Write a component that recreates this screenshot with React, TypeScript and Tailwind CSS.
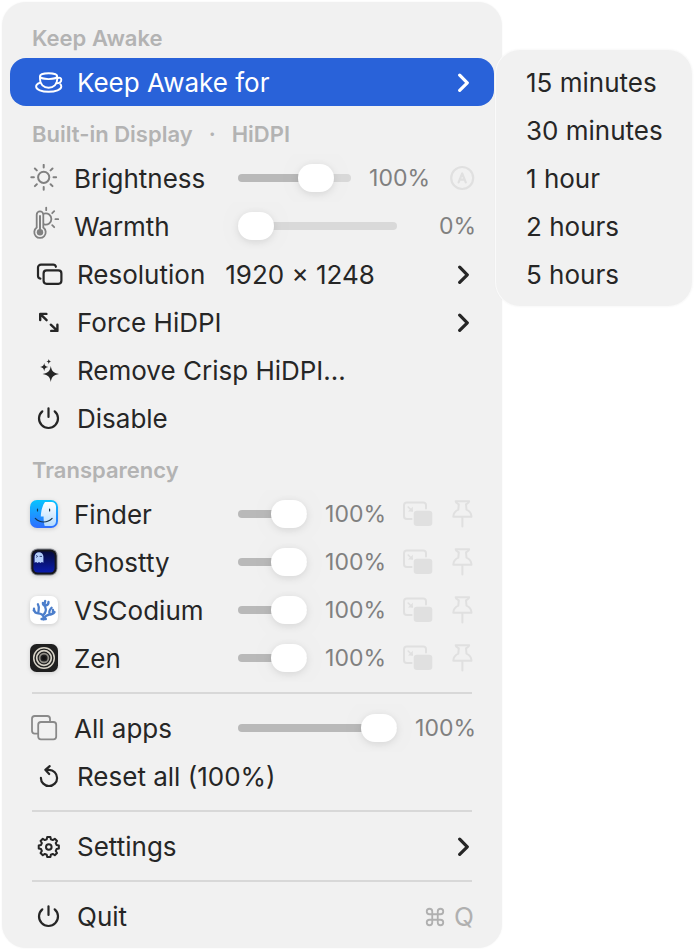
import React from 'react';
import { Command } from 'lucide-react';

const Cup = () => (
  <svg className="w-8 h-6 overflow-visible" viewBox="0 0 32 24" fill="none" stroke="currentColor" strokeWidth="1.9" strokeLinecap="round">
    <ellipse cx="16.6" cy="6.2" rx="8.6" ry="2.9" />
    <path d="M8 6.4v2.8c0 5 3.500 8.600 8.600 8.600s8.600-3.600 8.600-8.600V6.400" />
    <path d="M25.400 8.200c2-1 3.900-.2 3.900 1.600 0 2.100-2 3.500-4.900 3.500" />
    <path d="M7.600 12.800c-2.100.8-3.500 2.100-3.500 3.600 0 3.100 5.600 5.400 12.500 5.400s12.700-2.300 12.700-5.400c0-.9-.4-1.600-1-2.200" />
  </svg>
);

const Windows = () => (
  <svg className="w-8 h-6" viewBox="0 0 32 24" fill="none" stroke="currentColor" strokeWidth="2.2" strokeLinecap="round">
    <rect x="11.6" y="8.4" width="17.8" height="13.4" rx="3" />
    <path d="M8.4 16.6A2.8 2.8 0 0 1 6 13.800V5.600a3 3 0 0 1 3-3h12.200a2.800 2.800 0 0 1 2.700 2.200" />
  </svg>
);

const Expand = () => (
  <svg className="w-8 h-6" viewBox="0 0 32 24" fill="none" stroke="currentColor" strokeWidth="2.4" strokeLinecap="round" strokeLinejoin="round">
    <path d="M8.2 10V3.900h6.200M8.400 4.100l6.200 6.100M25.400 14.700v6.200h-6.200M25.200 20.700l-6.400-6" />
  </svg>
);

const Stars = () => (
  <svg className="w-8 h-6" viewBox="0 0 32 24" fill="currentColor">
    <path d="M18.8 8c.9 5 2.400 6.800 8.200 8-5.800 1.200-7.300 3-8.200 8-.9-5-2.400-6.800-8.200-8 5.800-1.200 7.300-3 8.200-8z" />
    <path d="M12.200 5c.5 2.600 1.200 3.500 4.100 4.100-2.900.6-3.600 1.500-4.100 4.100-.5-2.600-1.200-3.500-4.100-4.100 2.900-.6 3.600-1.500 4.100-4.100z" />
    <path d="M16.800 1c.3 1.600.8 2.200 2.500 2.600-1.700.4-2.200 1-2.500 2.600-.3-1.600-.8-2.200-2.500-2.600 1.700-.4 2.200-1 2.500-2.600z" />
  </svg>
);

const Power = () => (
  <svg className="w-8 h-6" viewBox="0 0 32 24" fill="none" stroke="currentColor" strokeWidth="2.2" strokeLinecap="round">
    <path d="M16.500 2.300v8.600M10.300 5.300a9.500 9.500 0 1 0 12.400 0" />
  </svg>
);

const Reset = () => (
  <svg className="w-8 h-6" viewBox="0 0 32 24" fill="none" stroke="currentColor" strokeWidth="2.2" strokeLinecap="round" strokeLinejoin="round">
    <path d="M17.700 2.200l-4.400 3.600 3.900 4.200M13.600 5.800H17a8.100 8.100 0 1 1-8.100 8.100" />
  </svg>
);

const gearPath = Array.from({ length: 8 }, (_, i) =>
  [[-15, 8], [-9, 10.2], [9, 10.2], [15, 8]]
    .map(([deg, r]) => {
      const a = ((i * 45 + deg - 90) * Math.PI) / 180;
      return `${(16.8 + r * Math.cos(a)).toFixed(2)} ${(13 + r * Math.sin(a)).toFixed(2)}`;
    })
    .join('L')
).join('L');

const Gear = () => (
  <svg className="w-8 h-6 overflow-visible" viewBox="0 0 32 24" fill="none" stroke="currentColor" strokeWidth="2" strokeLinejoin="round">
    <path d={`M${gearPath}Z`} />
    <circle cx="16.8" cy="13" r="2.8" />
  </svg>
);

const Sun = () => (
  <svg className="w-7 h-7" viewBox="0 0 28 28" fill="none" stroke="#808080" strokeWidth="2" strokeLinecap="round">
    <circle cx="13.7" cy="13.3" r="5.6" />
    <path d="M13.700.9v2.600M13.700 23.100v2.600M1.300 13.300h2.600M23.500 13.300h2.600M4.900 4.500l1.900 1.900M20.600 20.200l1.900 1.900M22.500 4.500l-1.900 1.900M6.800 20.200l-1.900 1.900" />
  </svg>
);

const Thermometer = () => (
  <svg className="w-7 h-10 overflow-visible" viewBox="0 0 28 40" fill="none" stroke="#808080" strokeWidth="1.8" strokeLinecap="round">
    <path d="M6.700 21.600V8.700a3.300 3.300 0 0 1 6.600 0v12.900a5.700 5.700 0 1 1-6.600 0z" />
    <path d="M10 10v16" strokeWidth="2" />
    <circle cx="10" cy="26.2" r="3.2" fill="#808080" stroke="none" />
    <path d="M14.300 7.600a5.600 5.600 0 1 1 0 10.800M16.200 1.600v2.600M22.200 7.200l2-2M25.400 13.200h2.800M22.200 19.200l2 2" />
  </svg>
);

const Stack = () => (
  <svg className="w-7 h-7" viewBox="0 0 28 28" fill="none" stroke="#8a8a8a" strokeWidth="1.8" strokeLinecap="round">
    <rect x="8.2" y="8" width="18" height="17.4" rx="2.8" />
    <path d="M7.400 19.600H4.800A2.800 2.800 0 0 1 2 16.800V4.800A2.800 2.800 0 0 1 4.800 2h12.400A2.800 2.800 0 0 1 20 4.800v2.400" />
  </svg>
);

const AutoIcon = () => (
  <svg className="w-[26px] h-[26px]" viewBox="0 0 26 26" fill="none" stroke="#e0e0e0" strokeWidth="2.2" strokeLinecap="round" strokeLinejoin="round">
    <circle cx="12.2" cy="13" r="11" />
    <path d="M8.600 17.400l3.600-9 3.600 9M9.900 14.600h4.600" />
  </svg>
);

const Pip = () => (
  <svg className="w-8 h-7" viewBox="0 0 32 28" fill="none" stroke="#e0e0e0" strokeWidth="2" strokeLinecap="round" strokeLinejoin="round">
    <path d="M9.600 19H4.800A2.800 2.800 0 0 1 2 16.200V5.300a2.800 2.800 0 0 1 2.800-2.800h16.400A2.800 2.800 0 0 1 24 5.300v3.200" />
    <path d="M6.200 7l4 4" strokeWidth="1.6" />
    <path d="M10.800 6.800v4.800H6z" fill="#e0e0e0" stroke="none" />
    <rect x="11.7" y="10.7" width="18.6" height="15.3" rx="3.2" fill="#e0e0e0" stroke="none" />
  </svg>
);

const Pin = () => (
  <svg className="w-[26px] h-[30px]" viewBox="0 0 26 30" fill="none" stroke="#e0e0e0" strokeWidth="2" strokeLinecap="round" strokeLinejoin="round">
    <path d="M5.600 2.200h13.600c0 1.500-1.900 2.300-3.200 3.200l.5 5.200c2.900 1.300 4.900 3.900 5 7.200H3.300c.1-3.300 2.100-5.900 5-7.200l.5-5.200C7.500 4.500 5.600 3.700 5.600 2.200z" />
    <path d="M12.400 18v9.600" />
  </svg>
);

const FinderLogo = () => (
  <svg className="w-7 h-7 drop-shadow-sm" viewBox="0 0 28 28">
    <defs>
      <linearGradient id="finderBg" x2="0" y2="1">
        <stop stopColor="#08c4ff" />
        <stop offset="1" stopColor="#2f6dff" />
      </linearGradient>
      <linearGradient id="finderFace" x2="0" y2="1">
        <stop stopColor="#fff" />
        <stop offset="1" stopColor="#b5dcff" />
      </linearGradient>
    </defs>
    <rect width="28" height="28" rx="7" fill="url(#finderBg)" />
    <path d="M15 2h6.500A4.500 4.500 0 0 1 26 6.500v15a4.500 4.500 0 0 1-4.500 4.500h-6.800c-.8-2.600-1.100-6-1.100-9.500h-2.800C11.100 10.500 12.600 5 15 2z" fill="url(#finderFace)" />
    <path d="M7.500 9.200v1.800M19.600 9.200v1.800M5.300 18.400c4.600 4.800 12.200 4.800 16.800 0" fill="none" stroke="#14354f" strokeWidth="1.2" strokeLinecap="round" />
  </svg>
);

const GhosttyLogo = () => (
  <svg className="w-7 h-7 drop-shadow-sm" viewBox="0 0 28 28">
    <defs>
      <linearGradient id="ghosttyBg" x2="0" y2="1">
        <stop stopColor="#060c3c" />
        <stop offset="1" stopColor="#0a1cae" />
      </linearGradient>
    </defs>
    <rect x=".5" y=".5" width="27" height="27" rx="7" fill="#8b8d94" />
    <rect x="1.4" y="1.4" width="25.2" height="25.2" rx="6.4" fill="#15161c" />
    <rect x="3.4" y="3.4" width="21.2" height="21.2" rx="4.5" fill="url(#ghosttyBg)" />
    <path d="M4.600 8.600a4.400 4.400 0 0 1 8.800 0v6.200l-1.500-.8-1.500.9-1.400-.9-1.500.9-1.400-.9-1.500.8z" fill="#b4cffb" />
    <path d="M6.200 7.400l1.400 1-1.400 1M9.600 8.400h2.400" fill="none" stroke="#26356b" strokeWidth=".9" />
  </svg>
);

const CodiumLogo = () => (
  <svg className="w-7 h-7 drop-shadow-sm" viewBox="0 0 28 28" fill="none" strokeLinecap="round" strokeLinejoin="round">
    <rect width="28" height="28" rx="7" fill="#fff" />
    <g stroke="#4c7ecb" strokeWidth="2.3">
      <path d="M13.600 23.300c.3-2.300.3-3.600-1.700-4.800-2.700-1.500-5.100-.6-6.700-2.100-1-1-1.200-2-1.200-3.700M8.500 17c-.8-2.600 1.900-4.200-.6-8.800M5.300 15.900l-1.600-1.500" />
      <path d="M13.200 19c2.600-2.400 3.300-5 2.100-7.400-1-2-1.300-3.600-.1-6.600M14.900 10c-1.500-.7-2.100-1.800-2-3.200M16 9.400c2-.5 2.600-1.900 2.500-3.400" />
      <path d="M14 22.500c1.900-3.800 4.100-3.500 6.600-4 2.400-.5 3.700-1.400 4-2.500M20 18.500c-1.500-2.400-.4-4.800 1.600-6.800M23 17.300c-.5-1.200.1-2.200 0-3.300" />
    </g>
    <path d="M11.600 23h4.200" stroke="#4c7ecb" strokeWidth="2.4" />
  </svg>
);

const ZenLogo = () => (
  <svg className="w-7 h-7 drop-shadow-sm" viewBox="0 0 28 28" fill="none" stroke="#d6d2c6">
    <rect width="28" height="28" rx="6.5" fill="#1f1f1f" stroke="none" />
    <circle cx="14" cy="14" r="10.3" strokeWidth="1.5" />
    <circle cx="14" cy="14" r="7.3" strokeWidth="1.7" />
    <circle cx="14" cy="14" r="4.4" strokeWidth="1.7" stroke="#8f8d86" />
    <circle cx="14" cy="14" r="2" fill="#111" stroke="none" />
  </svg>
);

const Chevron = () => (
  <svg className="w-4 h-6" viewBox="0 0 16 24" fill="none" stroke="currentColor" strokeWidth="3.2" strokeLinecap="round" strokeLinejoin="round">
    <path d="M1.700 5.200l7.600 7.600-7.600 7.600" />
  </svg>
);

type MenuItemProps = {
  icon: React.ReactNode;
  label: string;
  detail?: string;
  submenu?: boolean;
  active?: boolean;
  shortcut?: string;
};

const MenuItem: React.FC<MenuItemProps> = ({ icon, label, detail, submenu, active, shortcut }) => (
  <button
    type="button"
    aria-haspopup={submenu ? 'menu' : undefined}
    className={`flex items-center w-full h-12 pl-[22px] pr-5 gap-3 rounded-2xl text-left whitespace-nowrap ${active ? 'bg-[#2962d9] text-white' : 'text-[#262626]'}`}
  >
    <span className="shrink-0">{icon}</span>
    <span className="pt-0.5 pl-px">{label}</span>
    {detail && <span className="pt-0.5 ml-2">{detail}</span>}
    <span className="flex-1" />
    {submenu && <Chevron />}
    {shortcut && (
      <span className="flex items-center gap-2 pt-0.5 text-[#b0b0b0]">
        <Command size={22} strokeWidth={2} />
        {shortcut}
      </span>
    )}
  </button>
);

type SliderRowProps = {
  id: string;
  icon: React.ReactNode;
  label: string;
  value: number;
  max?: number;
  children?: React.ReactNode;
};

const SliderRow: React.FC<SliderRowProps> = ({ id, icon, label, value, max = 100, children }) => {
  const [current, setCurrent] = React.useState(value);

  return (
    <div className="flex items-center h-12 pl-5 pr-[18px] overflow-hidden whitespace-nowrap">
      <span className="shrink-0 w-7 mr-4">{icon}</span>
      <label htmlFor={id} className="shrink-0 w-[164px] pt-0.5">{label}</label>
      <input
        id={id}
        type="range"
        min={0}
        max={max}
        value={current}
        onChange={(e) => setCurrent(Number(e.target.value))}
        style={{ '--fill': `${(current / max) * 100}%` } as React.CSSProperties}
        className="flex-1 min-w-0 h-7 appearance-none bg-transparent [&::-webkit-slider-runnable-track]:h-2 [&::-webkit-slider-runnable-track]:rounded-full [&::-webkit-slider-runnable-track]:bg-[linear-gradient(to_right,#b9b9b9_var(--fill),#d9d9d9_var(--fill))] [&::-webkit-slider-thumb]:appearance-none [&::-webkit-slider-thumb]:w-9 [&::-webkit-slider-thumb]:h-7 [&::-webkit-slider-thumb]:-mt-2.5 [&::-webkit-slider-thumb]:rounded-[14px] [&::-webkit-slider-thumb]:bg-white [&::-webkit-slider-thumb]:shadow-[0_2px_8px_rgba(0,0,0,0.1),0_0_40px_rgba(0,0,0,0.04)]"
      />
      <output htmlFor={id} className="shrink-0 w-[79px] text-right text-[23px] text-[#808080]">{current}%</output>
      {children}
    </div>
  );
};

const SectionTitle: React.FC<{ title: string; tag?: string }> = ({ title, tag }) => (
  <h2 className="flex items-center gap-4 h-12 pt-2 pl-[22px] text-[22px] font-semibold text-[#b3b3b3] whitespace-nowrap">
    {title}
    {tag && <span>·</span>}
    {tag && <span>{tag}</span>}
  </h2>
);

const Divider = () => <hr className="my-2.5 mx-[22px] border-0 h-0.5 bg-[#d8d8d8]" />;

const apps = [
  { id: 'finder', name: 'Finder', icon: <FinderLogo /> },
  { id: 'ghostty', name: 'Ghostty', icon: <GhosttyLogo /> },
  { id: 'vscodium', name: 'VSCodium', icon: <CodiumLogo /> },
  { id: 'zen', name: 'Zen', icon: <ZenLogo /> }
];

const durations = ['15 minutes', '30 minutes', '1 hour', '2 hours', '5 hours'];

const App: React.FC = () => {
  return (
    <main className="flex items-start p-0.5 bg-white font-['Inter',sans-serif] text-[26px] leading-8 text-[#262626]">
      <div className="flex-1 min-w-0 max-w-[500px] p-2 rounded-3xl bg-[#f1f1f1] shadow-[0_0_2px_rgba(0,0,0,0.06)]">
        <SectionTitle title="Keep Awake" />
        <MenuItem icon={<Cup />} label="Keep Awake for" submenu active />

        <SectionTitle title="Built-in Display" tag="HiDPI" />
        <SliderRow id="brightness" icon={<Sun />} label="Brightness" value={100} max={128}>
          <button type="button" aria-label="Auto" className="shrink-0 ml-5"><AutoIcon /></button>
        </SliderRow>
        <SliderRow id="warmth" icon={<Thermometer />} label="Warmth" value={0} />
        <MenuItem icon={<Windows />} label="Resolution" detail="1920 × 1248" submenu />
        <MenuItem icon={<Expand />} label="Force HiDPI" submenu />
        <MenuItem icon={<Stars />} label="Remove Crisp HiDPI..." />
        <MenuItem icon={<Power />} label="Disable" />

        <SectionTitle title="Transparency" />
        {apps.map((app) => (
          <SliderRow key={app.id} id={app.id} icon={app.icon} label={app.name} value={100}>
            <button type="button" aria-label="Picture in picture" className="shrink-0 ml-4"><Pip /></button>
            <button type="button" aria-label="Pin" className="shrink-0 ml-4"><Pin /></button>
          </SliderRow>
        ))}
        <Divider />
        <SliderRow id="all" icon={<Stack />} label="All apps" value={100} />
        <MenuItem icon={<Reset />} label="Reset all (100%)" />
        <Divider />
        <MenuItem icon={<Gear />} label="Settings" submenu />
        <Divider />
        <MenuItem icon={<Power />} label="Quit" shortcut="Q" />
      </div>

      {/* Keep Awake submenu */}
      <div className="relative shrink-0 w-[196px] mt-12 -ml-1.5 p-2 rounded-3xl bg-[#f1f1f1] shadow-[0_0_0_1px_#fafafa,0_0_3px_rgba(0,0,0,0.06)]">
        {durations.map((label) => (
          <button key={label} type="button" className="block w-full h-12 pt-0.5 pl-[22px] text-left whitespace-nowrap">{label}</button>
        ))}
      </div>
    </main>
  );
};

export default App;
